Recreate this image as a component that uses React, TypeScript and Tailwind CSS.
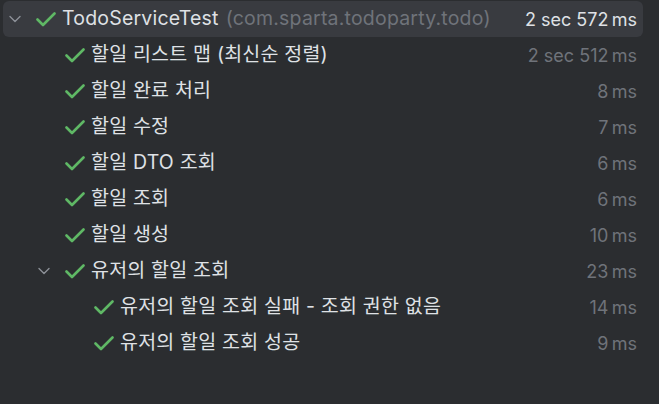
import React from 'react';

type Row = {
    level: number;
    name: string;
    pkg?: string;
    time: string;
    expandable?: boolean;
    selected?: boolean;
};

const rows: Row[] = [
    { level: 0, name: 'TodoServiceTest', pkg: '(com.sparta.todoparty.todo)', time: '2 sec 572\u2009ms', expandable: true, selected: true },
    { level: 1, name: '할일 리스트 맵 (최신순 정렬)', time: '2 sec 512\u2009ms' },
    { level: 1, name: '할일 완료 처리', time: '8\u2009ms' },
    { level: 1, name: '할일 수정', time: '7\u2009ms' },
    { level: 1, name: '할일 DTO 조회', time: '6\u2009ms' },
    { level: 1, name: '할일 조회', time: '6\u2009ms' },
    { level: 1, name: '할일 생성', time: '10\u2009ms' },
    { level: 1, name: '유저의 할일 조회', time: '23\u2009ms', expandable: true },
    { level: 2, name: '유저의 할일 조회 실패 - 조회 권한 없음', time: '14\u2009ms' },
    { level: 2, name: '유저의 할일 조회 성공', time: '9\u2009ms' },
];

function Chevron() {
    return (
        <svg width="12" height="8" viewBox="0 0 12 8" fill="none">
            <path d="M1 1.5 L6 6.5 L11 1.5" stroke="#8c9097" strokeWidth="1.4" strokeLinecap="round" strokeLinejoin="round" />
        </svg>
    );
}

function Check() {
    return (
        <svg width="20" height="15" viewBox="0 0 20 15" fill="none">
            <path d="M1.5 7.5 L7 13 L18.5 1.5" stroke="#5fb865" strokeWidth="2.6" strokeLinecap="round" strokeLinejoin="round" />
        </svg>
    );
}

const indent = ['pl-[4px]', 'pl-[33px]', 'pl-[62px]'];

export default function App() {
    return (
        <div className="w-[659px] h-[404px] bg-[#2b2d30] pt-px font-['Inter','Noto_Sans_CJK_KR',sans-serif] overflow-hidden">
            {rows.map((r, i) => (
                <div
                    key={i}
                    className={`ml-[3px] mr-[16px] h-[36px] flex items-center pr-[6px] rounded-[6px] ${indent[r.level]} ${r.selected ? 'bg-[#393b40]' : ''}`}
                >
                    <div className="w-[26px] flex items-center pl-[2px]">
                        {r.expandable && <Chevron />}
                    </div>
                    <div className="w-[29px] flex items-center pl-[3px]">
                        <Check />
                    </div>
                    <div className="flex-1 flex items-baseline gap-[7px] whitespace-nowrap text-[19.5px] tracking-[0.2px]">
                        <span className="text-[#dfe1e5]">{r.name}</span>
                        {r.pkg && <span className="text-[#6f737a]">{r.pkg}</span>}
                    </div>
                    <span className={`whitespace-nowrap text-[18px] ${r.selected ? 'text-[#dfe1e5]' : 'text-[#6f737a]'}`}>{r.time}</span>
                </div>
            ))}
        </div>
    );
}
